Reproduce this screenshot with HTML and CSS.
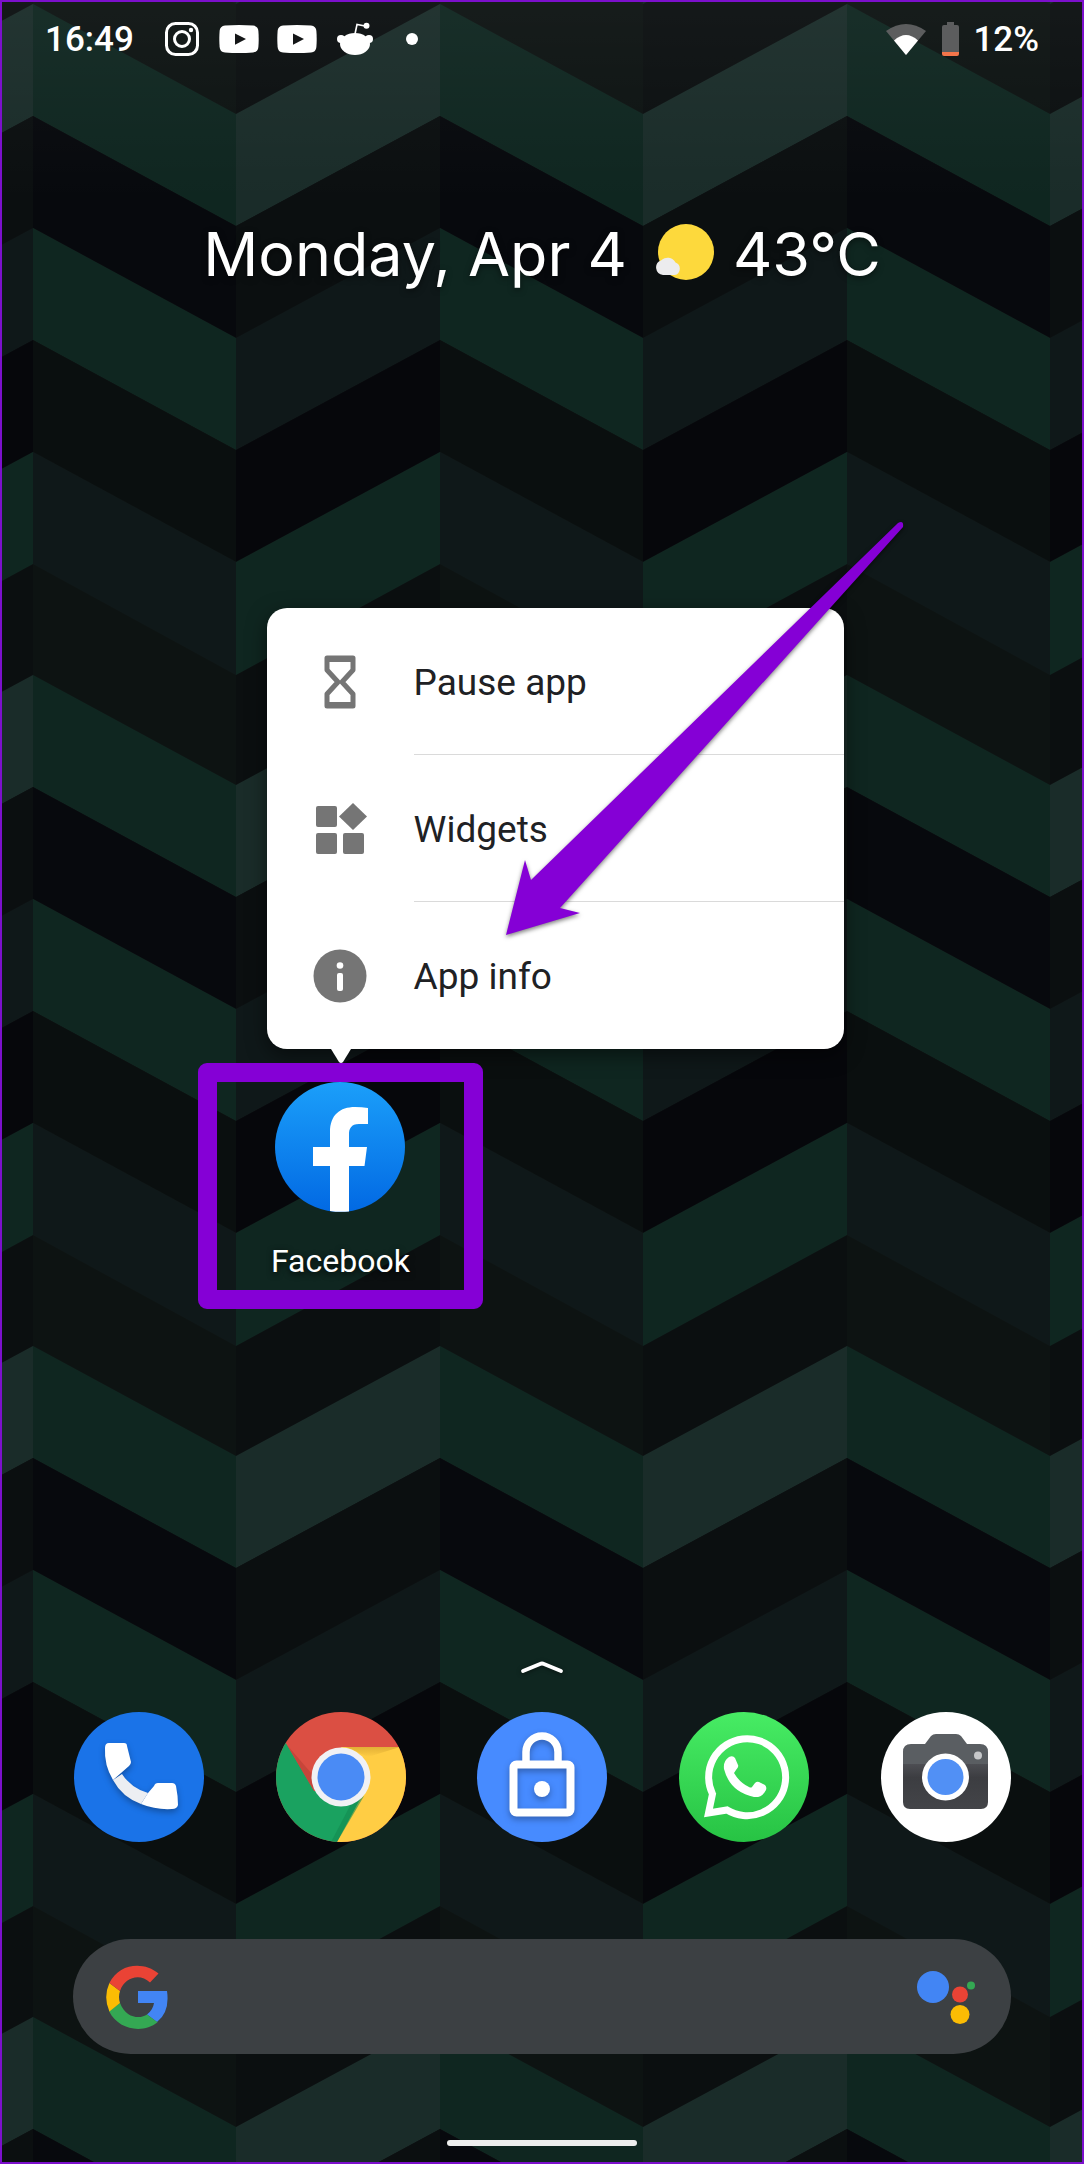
FILE: index.html
```html
<!DOCTYPE html>
<html lang="en">
<head>
<meta charset="utf-8">
<meta name="viewport" content="width=device-width, initial-scale=1">
<title>Home screen</title>
<link rel="stylesheet" href="styles.css">
</head>
<body>
<div class="screen">
  <svg class="wallpaper" width="100%" height="100%" aria-hidden="true">
    <defs>
      <pattern id="chevrons" x="31" y="2" width="407" height="671" patternUnits="userSpaceOnUse">
        <!-- descending half -->
        <rect width="204" height="671" fill="#0d1312"/>
        <path fill="#0f2620" d="M0 0L203 110V222L0 112Z"/>
        <path fill="#07090d" d="M0 112L203 222V334L0 224Z"/>
        <path fill="#0f2620" d="M0 224L203 334V446L0 336Z"/>
        <path fill="#0a0f0f" d="M0 336L203 446V558L0 448Z"/>
        <path fill="#0f1819" d="M0 448L203 558V671L0 560Z"/>
        <!-- ascending half -->
        <rect x="203" width="204" height="671" fill="#0b0f10"/>
        <path fill="#1a2c29" d="M203 110L407 0V112L203 222Z"/>
        <path fill="#0b0f10" d="M203 222L407 112V224L203 334Z"/>
        <path fill="#0f1819" d="M203 334L407 224V336L203 446Z"/>
        <path fill="#06070b" d="M203 446L407 336V448L203 558Z"/>
        <path fill="#0f2620" d="M203 558L407 448V560L203 671Z"/>
      </pattern>
      <linearGradient id="topShade" x1="0" y1="0" x2="0" y2="1">
        <stop offset="0" stop-color="#fff" stop-opacity=".04"/>
        <stop offset="1" stop-color="#fff" stop-opacity="0"/>
      </linearGradient>
    </defs>
    <rect width="100%" height="100%" fill="url(#chevrons)"/>
    <rect width="100%" height="200" fill="url(#topShade)"/>
  </svg>

  <header class="status">
    <time class="clock">16:49</time>
    <div class="notices">
      <svg class="n-insta" width="34" height="34" viewBox="0 0 34 34" aria-hidden="true"><g fill="none" stroke="#fff"><rect x="1.500" y="1.500" width="31" height="31" rx="9" stroke-width="3"/><circle cx="17" cy="17" r="7.500" stroke-width="3"/></g><circle cx="26" cy="8" r="2.200" fill="#fff"/></svg>
      <svg width="40" height="28" viewBox="0 0 40 28" aria-hidden="true"><path fill="#fff" d="M6 .5Q20-.5 34 .5Q39 1 39.400 6Q40 14 39.400 22Q39 27 34 27.500Q20 28.500 6 27.500Q1 27 .6 22Q0 14 .6 6Q1 1 6 .5Z"/><path fill="#141617" d="M16 8.500L27 14L16 19.800Z"/></svg>
      <svg width="40" height="28" viewBox="0 0 40 28" aria-hidden="true"><path fill="#fff" d="M6 .5Q20-.5 34 .5Q39 1 39.400 6Q40 14 39.400 22Q39 27 34 27.500Q20 28.500 6 27.500Q1 27 .6 22Q0 14 .6 6Q1 1 6 .5Z"/><path fill="#141617" d="M16 8.500L27 14L16 19.800Z"/></svg>
      <svg class="n-reddit" width="36" height="34" viewBox="0 0 36 34" aria-hidden="true"><ellipse cx="18" cy="22" rx="15" ry="11" fill="#fff"/><circle cx="4" cy="17" r="4" fill="#fff"/><circle cx="32" cy="17" r="4" fill="#fff"/><path d="M18 12L20 2.500L28 4" fill="none" stroke="#fff" stroke-width="1.600"/><circle cx="29.500" cy="3.800" r="3" fill="#fff"/></svg>
      <span class="more"></span>
    </div>
    <div class="system">
      <svg width="40" height="34" viewBox="0 0 40 34" aria-hidden="true"><path fill="#5c5d5e" d="M0 9Q20-5 40 9L20 33Z"/><path fill="#fff" d="M8 18.500Q20 7.500 32 18.500L20 33Z"/></svg>
      <svg width="17" height="34" viewBox="0 0 17 34" aria-hidden="true"><path fill="#5c5d5e" d="M5 0h7v3h3q2 0 2 2v26H0V5q0-2 2-2h3z"/><path fill="#f4754a" d="M0 30h17v2q0 2-2 2H2q-2 0-2-2z"/></svg>
      <span class="percent">12%</span>
    </div>
  </header>

  <section class="glance">
    <span>Monday, Apr 4</span>
    <svg class="weather" width="60" height="60" viewBox="0 0 60 60" role="img" aria-label="Mostly sunny"><circle cx="31" cy="28" r="28" fill="#fdd93c"/><path fill="#ececee" d="M8 51a7.500 7.500 0 0 1-2-14.500a9 9 0 0 1 14.500 2a6.500 6.500 0 0 1-1 12.500z"/></svg>
    <span>43°C</span>
  </section>

  <main class="workspace">
    <div class="slot">
      <a class="app" href="#facebook">
        <svg class="icon" viewBox="0 0 130 130" aria-hidden="true">
          <defs><linearGradient id="fb" x1="0" y1="0" x2="0" y2="1"><stop offset="0" stop-color="#1b9ffa"/><stop offset="1" stop-color="#0269e3"/></linearGradient></defs>
          <circle cx="65" cy="65" r="65" fill="url(#fb)"/>
          <path fill="#fff" d="M55 129V84H38V65H55V50C55 33 65 25 80 25Q87 25 93 26V42H84C76 42 74 47 74 52V65H92L89.500 84H74V129.400Q64.500 130.500 55 129Z"/>
        </svg>
        <span class="app-name">Facebook</span>
      </a>
      <div class="popup">
        <button class="item" type="button">
          <svg class="item-icon" viewBox="0 0 54 54" aria-hidden="true"><path fill="none" stroke="#757575" stroke-width="5" stroke-linejoin="round" d="M14 3H40V15L29 27L40 39V51H14V39L25 27L14 15Z"/><path fill="#757575" d="M14 1h26v6H14zM14 47h26v6H14z"/></svg>
          <span class="item-text">Pause app</span>
        </button>
        <button class="item" type="button">
          <svg class="item-icon" viewBox="0 0 54 54" aria-hidden="true"><g fill="#757575"><rect x="3" y="4" width="21" height="21" rx="2"/><rect x="3" y="31" width="21" height="21" rx="2"/><rect x="30" y="31" width="21" height="21" rx="2"/><path d="M40 1L54 14.500L40 28L26 14.500Z"/></g></svg>
          <span class="item-text">Widgets</span>
        </button>
        <button class="item" type="button">
          <svg class="item-icon" viewBox="0 0 54 54" aria-hidden="true"><circle cx="27" cy="27" r="26.500" fill="#757575"/><circle cx="27" cy="16.500" r="3.300" fill="#fff"/><rect x="24" y="24" width="6" height="18" rx="2" fill="#fff"/></svg>
          <span class="item-text">App info</span>
        </button>
        <svg class="pointer" width="20" height="14" viewBox="0 0 20 14" aria-hidden="true"><path fill="#fff" d="M0 0H20L12 13Q10 15 8 13Z"/></svg>
        <svg class="arrow" width="420" height="440" viewBox="0 0 420 440" aria-hidden="true"><path fill="#8500d6" d="M6 420L25 345L31 365L398 8Q404 5 403 12L60 393L80 398Z"/></svg>
      </div>
      <div class="highlight"></div>
    </div>
  </main>

  <footer class="bottom">
    <button class="drawer" type="button" aria-label="All apps"><svg width="44" height="14" viewBox="0 0 44 14" aria-hidden="true"><path d="M3 11L20 4Q22 3 24 4L41 11" fill="none" stroke="#fff" stroke-width="3.800" stroke-linecap="round"/></svg></button>
    <nav class="dock">
      <a href="#phone" aria-label="Phone">
        <svg class="icon" viewBox="0 0 130 130"><circle cx="65" cy="65" r="65" fill="#1a73e8"/>
          <g class="soft"><path fill="#eceef2" d="M48 62Q57 76 74 81L67 92Q48 85 39 68Z"/><path fill="#fff" d="M35 31H50Q53 31 53 34L57 50Q57 52 55 54L39 68Q30 53 31 36Q31 31 35 31Z"/><path fill="#fff" d="M80 74Q81 71 84 71H98Q101 71 102 74Q104 84 104 93Q103 97 98 97Q82 98 67 92L74 81Z"/></g></svg>
      </a>
      <a href="#chrome" aria-label="Chrome">
        <svg class="icon" viewBox="0 0 130 130">
          <defs><clipPath id="disc"><circle cx="65" cy="65" r="65"/></clipPath>
          <linearGradient id="ys" x1="0" y1="0" x2="0" y2="1"><stop offset="0" stop-color="#e2b036"/><stop offset="1" stop-color="#ffcd44"/></linearGradient></defs>
          <g clip-path="url(#disc)"><rect width="130" height="130" fill="#db4f43"/><path fill="#1aa260" d="M0 15L11 33L38 79L88 84L61 130H0Z"/><path fill="#ffcd44" d="M65 35H130V130H61L88 80Z"/><path fill="url(#ys)" d="M70 35H124L92 45Z"/><path fill="#138a50" d="M88 84L61 130H55L75 92Z" opacity=".6"/><path fill="#b93f35" d="M11 33L38 79L36 62Z" opacity=".6"/></g>
          <circle cx="65" cy="65" r="29.500" fill="#f1f1f4"/><circle cx="65" cy="65" r="23.500" fill="#4a8bf5"/></svg>
      </a>
      <a href="#lock" aria-label="Screen lock">
        <svg class="icon" viewBox="0 0 130 130"><circle cx="65" cy="65" r="65" fill="#478bff"/><g class="soft"><rect x="36.500" y="52.500" width="57" height="48" rx="3" fill="none" stroke="#fff" stroke-width="8"/><path d="M49 51V40a16 16 0 0 1 32 0V51" fill="none" stroke="#fff" stroke-width="7.500"/><circle cx="65" cy="77" r="8" fill="#fff"/></g></svg>
      </a>
      <a href="#whatsapp" aria-label="WhatsApp">
        <svg class="icon" viewBox="0 0 130 130">
          <defs><linearGradient id="wa" x1="0" y1="0" x2="0" y2="1"><stop offset="0" stop-color="#47ec64"/><stop offset="1" stop-color="#27c344"/></linearGradient></defs>
          <circle cx="65" cy="65" r="65" fill="url(#wa)"/><path fill="none" stroke="#fff" stroke-width="7" d="M29.500 101L33.500 82A38.500 38.500 0 1 1 48 98Z"/><path fill="#fff" d="M50 45Q54 43 56 46L59 53Q60 55 57 58L55 61Q61 71 70 75Q72 76 73 75L76 71Q78 69 80 70L86 73Q88 75 87 78Q83 86 75 85Q51 80 45 57Q44 49 50 45Z"/></svg>
      </a>
      <a href="#camera" aria-label="Camera">
        <svg class="icon" viewBox="0 0 130 130">
          <defs><linearGradient id="cam" x1="0" y1="0" x2="0" y2="1"><stop offset="0" stop-color="#4d4e53"/><stop offset=".3" stop-color="#3c3d41"/><stop offset="1" stop-color="#434448"/></linearGradient></defs>
          <circle cx="65" cy="65" r="65" fill="#fff"/><path fill="#5a5e62" d="M30 32H44L50 24Q52 22 55 22H75Q78 22 80 24L86 32H99Q107 32 107 40V53H22V40Q22 32 30 32Z"/><path fill="url(#cam)" d="M22 52H107V90Q107 97 100 97H29Q22 97 22 90Z"/><circle cx="64.500" cy="65" r="23.500" fill="#fff"/><circle cx="64.500" cy="65" r="18" fill="#5190f5"/><circle cx="97" cy="43.500" r="4" fill="#c6c8ca"/></svg>
      </a>
    </nav>
    <div class="search">
      <button type="button" aria-label="Google"><svg width="62" height="64" viewBox="0 0 62 64" aria-hidden="true">
        <path fill="#4285f4" d="M32 26H61Q64 47 51 57L41 49.500Q47 45 48 38H32Z"/>
        <path fill="#34a853" d="M3 46L14 38C20 54 35 54 41 49.500L51.500 57.300C37 69 12 65 3 46Z"/>
        <path fill="#fbbc04" d="M3.400 18L14 26Q12 32 14 38L3.400 46.500Q-3 32 3.400 18Z"/>
        <path fill="#ea4335" d="M3.400 18C13-2 38-4 52.500 8.500L44 17.500C34 8 19 12 14 26Z"/>
      </svg></button>
      <input type="search" aria-label="Search">
      <button type="button" aria-label="Assistant"><svg width="60" height="56" viewBox="0 0 60 56" aria-hidden="true"><circle cx="17" cy="18" r="16" fill="#4285f4"/><circle cx="44" cy="25.500" r="8" fill="#ea4335"/><circle cx="55" cy="16.500" r="4" fill="#34a853"/><circle cx="44" cy="45.500" r="9.500" fill="#fbbc04"/></svg></button>
    </div>
    <div class="home-bar"></div>
  </footer>
</div>
</body>
</html>
```
FILE: styles.css
```css
* { box-sizing: border-box; }

body {
  margin: 0;
  background: #07090d;
  color: #fff;
  font-family: Roboto, "Noto Sans", sans-serif;
}

button {
  margin: 0;
  padding: 0;
  border: 0;
  background: none;
  color: inherit;
  font: inherit;
}

a { color: inherit; text-decoration: none; }
svg { display: block; flex: none; }

.screen {
  position: relative;
  isolation: isolate;
  display: flex;
  flex-direction: column;
  min-height: 100vh;
  border: 2px solid #7c10cc;
}

.wallpaper {
  position: absolute;
  inset: 0;
  z-index: -1;
}

/* Status bar */
.status {
  display: flex;
  align-items: center;
  height: 74px;
  padding: 0 43px;
  font-size: 35px;
  font-weight: 500;
  line-height: 42px;
}
.clock { width: 120px; padding-top: 2px; }
.notices { display: flex; align-items: center; gap: 18px; }
.n-insta { margin-right: 2px; }
.n-reddit { margin-left: 2px; }
.more {
  width: 12px;
  height: 12px;
  margin-left: 15px;
  border-radius: 50%;
  background: #fff;
}
.system { display: flex; align-items: center; gap: 16px; margin-left: auto; }
.percent { margin-left: -2px; padding-top: 2px; }

/* Date and weather */
.glance {
  display: flex;
  justify-content: center;
  align-items: center;
  gap: 18px;
  height: 80px;
  margin-top: 138px;
  font: 61px Inter, Roboto, sans-serif;
  text-shadow: 0 2px 6px rgba(0, 0, 0, .5);
}
.weather { margin-left: 10px; }

/* App grid */
.workspace {
  display: grid;
  grid-template-columns: repeat(5, 1fr);
  flex: 1;
  align-items: start;
  padding: 788px 36px 0;
}
.slot { position: relative; grid-column: 2; }
.app {
  display: flex;
  flex-direction: column;
  align-items: center;
  gap: 29px;
}
.icon { width: 130px; height: 130px; }
.app-name {
  font-size: 32px;
  line-height: 40px;
  text-shadow: 0 2px 6px rgba(0, 0, 0, .8);
}
.highlight {
  position: absolute;
  inset: -19px -42px -28px;
  border: 19px solid #8500d6;
  border-radius: 9px;
}

/* Shortcut popup */
.popup {
  position: absolute;
  bottom: calc(100% + 33px);
  left: 27px;
  width: 577px;
  border-radius: 20px;
  background: #fff;
  box-shadow: 0 6px 20px rgba(0, 0, 0, .5);
  color: #202124;
}
.item {
  display: flex;
  align-items: center;
  gap: 47px;
  width: 100%;
  height: 147px;
  padding-left: 46px;
  font-size: 37px;
  text-align: left;
}
.item-icon { width: 54px; height: 54px; }
.item-text { flex: 1; align-self: stretch; line-height: 150px; }
.item:not(:nth-child(3)) .item-text { border-bottom: 1px solid #dadada; }
.pointer { position: absolute; top: 100%; left: 64px; }
.arrow {
  position: absolute;
  top: -93px;
  left: 233px;
  filter: drop-shadow(0 2px 2px rgba(0, 0, 0, .5));
}

/* Dock, search bar, navigation handle */
.drawer { display: block; margin: 0 auto; }
.drawer svg { filter: drop-shadow(0 1px 2px rgba(0, 0, 0, .5)); }
.dock {
  display: grid;
  grid-template-columns: repeat(5, 1fr);
  justify-items: center;
  padding: 38px 35px 0 36px;
}
.soft { filter: drop-shadow(0 3px 3px rgba(0, 0, 0, .3)); }
.search {
  display: flex;
  align-items: center;
  height: 115px;
  margin: 97px 71px 86px;
  padding: 0 35px 0 33px;
  border-radius: 58px;
  background: #3c4043;
}
.search input {
  flex: 1;
  min-width: 0;
  height: 100%;
  border: 0;
  outline: 0;
  background: none;
  color: #fff;
  font: 36px Roboto, sans-serif;
}
.home-bar {
  width: 190px;
  height: 6px;
  margin: 0 auto 16px;
  border-radius: 3px;
  background: #eee;
}
```
